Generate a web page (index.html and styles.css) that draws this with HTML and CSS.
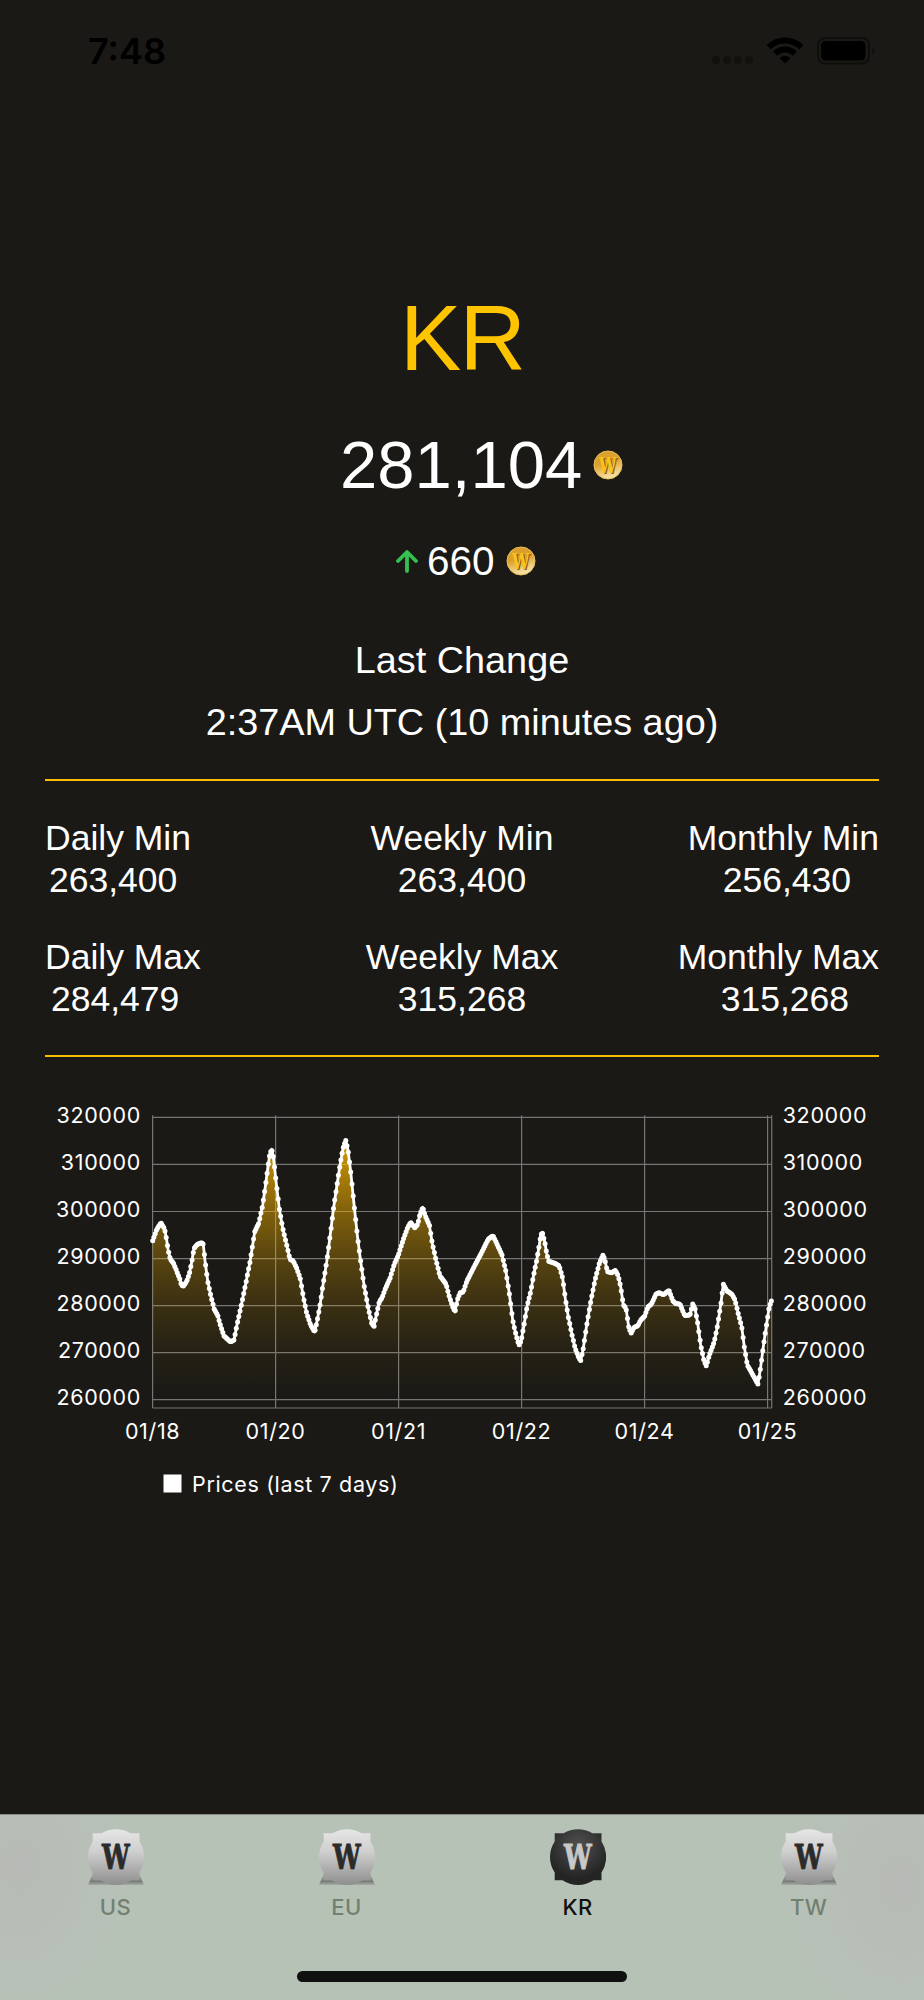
FILE: index.html
```html
<!DOCTYPE html>
<html lang="en">
<head>
    <meta charset="UTF-8">
    <meta name="viewport" content="width=device-width, initial-scale=1.0">
    <title>Token Price - KR</title>
    <link rel="stylesheet" href="styles.css">
</head>
<body>
    <!-- shared shapes for the coin and the tab icons -->
    <svg class="defs" width="0" height="0">
        <defs>
            <linearGradient id="coinFill" x1="0" y1="0" x2="0.3" y2="1">
                <stop offset="0" stop-color="#d9a02c"/>
                <stop offset="0.5" stop-color="#dc9f2e"/>
                <stop offset="0.8" stop-color="#edc873"/>
                <stop offset="1" stop-color="#f6dfa0"/>
            </linearGradient>
            <linearGradient id="lightFill" x1="0" y1="0" x2="0" y2="1">
                <stop offset="0" stop-color="#e6e6e6"/>
                <stop offset="0.4" stop-color="#cfcfcf"/>
                <stop offset="1" stop-color="#8e8e8e"/>
            </linearGradient>
            <radialGradient id="darkFill" cx="50%" cy="28%" r="60%">
                <stop offset="0" stop-color="#505050"/>
                <stop offset="1" stop-color="#242424"/>
            </radialGradient>
            <linearGradient id="shadowFill" x1="0" y1="0" x2="0" y2="1">
                <stop offset="0" stop-color="#555" stop-opacity="0"/>
                <stop offset="0.7" stop-color="#555" stop-opacity="0.65"/>
                <stop offset="1" stop-color="#777" stop-opacity="0.3"/>
            </linearGradient>
            <path id="badge" d="M4.7 4.3H13.5A28 28 0 0 1 42.5 4.3H51.5V12.5A28 28 0 0 1 51.5 43.5V51.3H43.5A28 28 0 0 1 12.5 51.3H4.7V43.5A28 28 0 0 1 4.7 12.5Z"/>
            <symbol id="coin" viewBox="0 0 30 30">
                <circle cx="15" cy="15" r="14" fill="url(#coinFill)" stroke="#e9bf5f"/>
                <text class="coin-w shade" x="7.2" y="23.8" textLength="17.5" lengthAdjust="spacingAndGlyphs">W</text>
                <text class="coin-w" x="6" y="23.2" textLength="17.5" lengthAdjust="spacingAndGlyphs">W</text>
            </symbol>
            <symbol id="tabLight" viewBox="0 0 56 56">
                <path d="M5 44L0 56H56L51 44Z" fill="url(#shadowFill)"/>
                <use href="#badge" fill="url(#lightFill)"/>
                <text class="badge-w" x="14" y="41.2" fill="#e4e4e4" textLength="28" lengthAdjust="spacingAndGlyphs">W</text>
                <text class="badge-w" x="14" y="39.6" fill="#2b2b2b" stroke="#2b2b2b" textLength="28" lengthAdjust="spacingAndGlyphs">W</text>
            </symbol>
            <symbol id="tabDark" viewBox="0 0 56 56">
                <use href="#badge" fill="url(#darkFill)"/>
                <text class="badge-w" x="14" y="39.6" fill="#c8c8c8" stroke="#c8c8c8" textLength="28" lengthAdjust="spacingAndGlyphs">W</text>
            </symbol>
        </defs>
    </svg>

    <header class="status-bar">
        <span class="time">7:48</span>
        <div class="indicators">
            <div class="dots"><i></i><i></i><i></i><i></i></div>
            <svg class="wifi" width="36" height="27" viewBox="0 0 36 27">
                <path d="M1.7 10.2A23 23 0 0 1 34.3 10.2M8.1 16.6A14 14 0 0 1 27.9 16.6" fill="none" stroke="#000" stroke-width="6"/>
                <path d="M18 26.5L12.7 21.2A7.5 7.5 0 0 1 23.3 21.2Z"/>
            </svg>
            <svg class="battery" width="59" height="28" viewBox="0 0 59 28">
                <rect x="1" y="1" width="51" height="25.5" rx="7" fill="none" stroke="#0f0e0c" stroke-width="2"/>
                <rect x="4" y="4" width="44.5" height="19.5" rx="4.5"/>
                <path d="M55.5 9.5A5.5 5.5 0 0 1 55.5 18Z" fill="#0f0e0c"/>
            </svg>
        </div>
    </header>

    <main>
        <h1>KR</h1>
        <div class="price">
            <span>281,104</span>
            <svg class="coin"><use href="#coin"/></svg>
        </div>
        <div class="change">
            <svg class="arrow" width="22" height="23" viewBox="0 0 22 23">
                <path d="M11 21V2.5M2 11L11 2L20 11" fill="none" stroke="#34c14f" stroke-width="3.8" stroke-linecap="round" stroke-linejoin="round"/>
            </svg>
            <span>660</span>
            <svg class="coin"><use href="#coin"/></svg>
        </div>
        <div class="updated">
            <div>Last Change</div>
            <div class="when">2:37AM UTC (10 minutes ago)</div>
        </div>

        <section class="stats">
            <div class="stat left"><div>Daily Min</div><div class="value">263,400</div></div>
            <div class="stat"><div>Weekly Min</div><div class="value">263,400</div></div>
            <div class="stat right"><div>Monthly Min</div><div class="value">256,430</div></div>
            <div class="stat left max"><div>Daily Max</div><div class="value">284,479</div></div>
            <div class="stat"><div>Weekly Max</div><div class="value">315,268</div></div>
            <div class="stat right max"><div>Monthly Max</div><div class="value">315,268</div></div>
        </section>

        <svg class="chart" id="chart" width="924" height="420" viewBox="0 0 924 420">
            <defs>
                <linearGradient id="areaFill" gradientUnits="userSpaceOnUse" x1="0" y1="25" x2="0" y2="318">
                    <stop offset="0" stop-color="#ffc000" stop-opacity="0.98"/>
                    <stop offset="0.16" stop-color="#ffb800" stop-opacity="0.7"/>
                    <stop offset="0.32" stop-color="#ffb800" stop-opacity="0.46"/>
                    <stop offset="0.49" stop-color="#ffb800" stop-opacity="0.27"/>
                    <stop offset="0.65" stop-color="#ffb800" stop-opacity="0.14"/>
                    <stop offset="0.81" stop-color="#ffb800" stop-opacity="0.045"/>
                    <stop offset="0.95" stop-color="#ffb800" stop-opacity="0"/>
                </linearGradient>
            </defs>
            <g id="grid"></g>
            <g id="series"></g>
            <g id="labels"></g>
            <rect x="163.5" y="384.5" width="18" height="18" fill="#fff"/>
            <text class="legend" x="192" y="402">Prices (last 7 days)</text>
        </svg>
    </main>

    <nav class="tab-bar">
        <div class="tabs">
            <div class="tab"><svg><use href="#tabLight"/></svg><span>US</span></div>
            <div class="tab"><svg><use href="#tabLight"/></svg><span>EU</span></div>
            <div class="tab active"><svg><use href="#tabDark"/></svg><span>KR</span></div>
            <div class="tab"><svg><use href="#tabLight"/></svg><span>TW</span></div>
        </div>
        <div class="home-indicator"></div>
    </nav>

    <script src="chart.js"></script>
</body>
</html>
```
FILE: styles.css
```css
body {
    margin: 0;
    width: 924px;
    height: 2000px;
    display: flex;
    flex-direction: column;
    overflow: hidden;
    background-color: #1a1915;
    color: #fff;
    font-family: "Liberation Sans", Arial, sans-serif;
}
.defs {
    position: absolute;
}
.status-bar {
    height: 101px;
    box-sizing: border-box;
    padding: 0 49px 0 88px;
    display: flex;
    justify-content: space-between;
    align-items: center;
    color: #000;
    font-family: Inter, sans-serif;
}
.time {
    font-size: 36px;
    font-weight: 600;
    line-height: 44px;
}
.indicators {
    display: flex;
    align-items: center;
}
.dots {
    display: flex;
    gap: 3px;
    margin: 18px 14px 0 0;
}
.dots i {
    width: 8px;
    height: 8px;
    border-radius: 50%;
    background-color: #12110e;
}
.battery {
    margin-left: 14px;
    margin-right: -1px;
}
main {
    flex: 1;
    padding-top: 187px;
}
h1 {
    margin: 0;
    color: #ffc400;
    font-size: 92px;
    font-weight: normal;
    line-height: 100px;
    letter-spacing: -2px;
    text-align: center;
}
.price {
    display: flex;
    align-items: center;
    margin-top: 37px;
    padding-left: 340px;
    font-size: 67px;
    line-height: 80px;
}
.price .coin {
    margin-left: 11px;
}
.coin {
    width: 30px;
    height: 30px;
}
.coin-w {
    font: bold 23px "DejaVu Serif", serif;
    fill: #f8c41c;
}
.coin-w.shade {
    fill: #8a5a12;
}
.change {
    display: flex;
    align-items: center;
    margin-top: 31px;
    padding-left: 396px;
    font-size: 40.5px;
    line-height: 50px;
}
.change span {
    margin: 0 11px 0 9px;
}
.updated {
    margin-top: 43px;
    font-size: 37.8px;
    line-height: 62px;
    text-align: center;
}
.stats {
    display: grid;
    grid-template-columns: 1fr 1fr 1fr;
    row-gap: 35px;
    margin: 26px 45px 0;
    padding: 36px 0 35px;
    border-top: 2px solid #fbbf00;
    border-bottom: 2px solid #fbbf00;
    font-size: 35.5px;
    line-height: 42px;
}
.stat {
    text-align: center;
}
.stat.left {
    text-align: left;
}
.stat.right {
    text-align: right;
}
.left .value {
    padding-left: 4px;
}
.right .value {
    padding-right: 28px;
}
.left.max .value {
    padding-left: 6px;
}
.right.max .value {
    padding-right: 30px;
}
.chart {
    display: block;
    margin-top: 33px;
}
.chart text {
    fill: #fff;
    font-family: Inter, sans-serif;
    font-size: 21.5px;
    letter-spacing: 0.65px;
}
.chart .grid-line {
    stroke: #757573;
    stroke-width: 1.2;
}
.tab-bar {
    height: 186px;
    box-sizing: border-box;
    padding-top: 14px;
    border-top: 1px solid #858a83;
    background-color: #b7c2b7;
    background-image:
        radial-gradient(ellipse 110px 150px at 20px 50px, rgba(184, 184, 182, 0.75), rgba(184, 184, 182, 0)),
        radial-gradient(ellipse 120px 150px at 900px 70px, rgba(184, 184, 182, 0.75), rgba(184, 184, 182, 0));
}
.tabs {
    display: flex;
}
.tab {
    flex: 1;
    display: flex;
    flex-direction: column;
    align-items: center;
    gap: 7px;
    color: #718171;
    font-family: Inter, sans-serif;
    font-size: 22px;
    font-weight: 500;
    line-height: 30px;
    letter-spacing: 0.4px;
}
.tab svg {
    width: 56px;
    height: 56px;
}
.tab.active {
    color: #11120f;
}
.badge-w {
    font: bold 33px "DejaVu Serif", serif;
    stroke-width: 1px;
}
.home-indicator {
    width: 330px;
    height: 11px;
    margin: 49px auto 0;
    border-radius: 6px;
    background-color: #101010;
}
```
FILE: chart.js
```javascript
const svgNS = 'http://www.w3.org/2000/svg';
const left = 152.6, right = 771.7, top_ = 25.3, bottom = 318;

// turning points of the price line, in chart units
const turns = [
    [152.7,150.7],[156.7,139.3],[161,132.7],[164.7,139.3],[166.7,150],[168,159.3],[170.3,169.3],[173.3,172.7],
    [177.3,182.7],[179.7,188.7],[181.3,194.7],[183.3,196.3],[186.7,191.3],[189.3,184],[191.7,172],[194,158.3],
    [197.3,154.3],[201.7,152.7],[203.3,154.3],[205,170.7],[207.7,190.7],[211,206.7],[214.3,219.3],[217.7,225.3],
    [220.7,236],[224,246],[230.7,252],[234,250],[237.3,233.3],[241.7,213.3],[246,192.3],[250,171.7],
    [252.3,157.3],[254.7,141.7],[258.7,133.3],[262.7,115],[265.3,96.7],[268.3,74],[270,63.3],[271.7,59.3],
    [273.3,66.7],[276.3,93.3],[279.3,118.7],[282.7,138],[286.7,155],[290,169.3],[293.3,171],[296.7,178.3],
    [300.3,188.7],[303.3,206.7],[306.7,223.3],[310.7,235],[314.7,242],[317.3,230],[320.3,213.3],[322.7,196.7],
    [326.7,171.7],[330,146.7],[333.3,120],[336.7,96.7],[340,75],[343,58.3],[345.7,50],[348,60],
    [350.7,81.7],[354,114],[357.3,145],[360.7,171.7],[364.3,196.7],[368.3,218.3],[371.7,233.3],[374,236.7],
    [376.7,223.3],[379.3,211.7],[382.3,207.3],[385.3,198.7],[390,188.3],[394,175],[398.7,164],[403.3,149.3],
    [407.7,137.3],[410.7,132.3],[414.7,137.7],[417.7,134.3],[420,124],[422.7,117.3],[425.3,126],[429.3,134.7],
    [432.3,153.3],[436,170],[440,186],[446,194],[449.3,206.7],[452.7,216.7],[455,222],[457.3,210],
    [460,202.7],[463.3,202],[466.7,191.3],[475,175],[481.7,162.3],[488.3,149],[493,145.7],[496.7,153.3],
    [502,165],[506,181.7],[509.3,203.3],[512.7,230],[516,245],[519,255.3],[521.3,250],[524,235],
    [527.3,215],[530.7,201.7],[533.3,186.7],[536.7,170],[539.3,155],[540.7,145],[542.3,142.3],[544.7,151.7],
    [546.7,163.3],[548.7,171.3],[555,173.3],[559.3,176],[562.7,188.3],[565.3,208.3],[568.3,226.7],[571.7,243.3],
    [575,257.7],[578.3,266.7],[580.7,270.7],[583.3,258.3],[586.7,235],[590.7,211.7],[595,190],[599.3,173.3],
    [603,165],[605,170],[607.3,181.7],[611.7,182.7],[615.3,180.3],[618,185],[620.7,196.7],[623.3,215],
    [626,218.3],[628.7,236.7],[631,243.3],[634,237.3],[637.7,236],[640.7,230],[644.7,226],[648,216.7],
    [651.3,214.3],[656,204],[659.3,202.7],[663.3,204.7],[669,200.3],[672.7,210.7],[676,213.7],[680,214],
    [684.7,225.7],[690,225],[692.7,214],[695,218.3],[697.7,233.3],[700.7,255],[704,270.7],[706.3,276],
    [709.3,265],[714.3,251.7],[717.3,236.7],[720.7,215],[723.3,194],[726.7,200.7],[731.7,204],[735,210],
    [738.3,224],[741.7,236.7],[744.3,256.7],[747.3,275],[751.7,282.7],[758,294.3],[760.7,276.7],[763.3,256.7],
    [766.7,233.3],[769.3,216.7],[771.7,210]
];

function add(parent, name, attrs, text) {
    const el = document.createElementNS(svgNS, name);
    for (const key in attrs) {
        el.setAttribute(key, attrs[key]);
    }
    if (text) {
        el.textContent = text;
    }
    document.getElementById(parent).appendChild(el);
}

function line(x1, y1, x2, y2) {
    add('grid', 'line', { x1: x1, y1: y1, x2: x2, y2: y2, class: 'grid-line' });
}

// horizontal lines with a price on both sides
for (let i = 0; i < 7; i++) {
    const y = 27.4 + i * 47.05;
    const price = String(320000 - i * 10000);
    line(left, y, right, y);
    add('labels', 'text', { x: 141, y: y + 5.3, 'text-anchor': 'end' }, price);
    add('labels', 'text', { x: 782.7, y: y + 5.3 }, price);
}

// vertical lines with dates
['01/18', '01/20', '01/21', '01/22', '01/24', '01/25'].forEach((date, i) => {
    const x = left + i * 123;
    line(x, top_, x, bottom);
    add('labels', 'text', { x: x, y: 349, 'text-anchor': 'middle' }, date);
});
line(right, top_, right, bottom);
line(left, bottom, right, bottom);

const path = turns.map(p => p.join(' ')).join('L');
add('series', 'path', { d: 'M' + path + 'L' + right + ' ' + bottom + 'L' + left + ' ' + bottom + 'Z', fill: 'url(#areaFill)' });
add('series', 'path', { d: 'M' + path, fill: 'none', stroke: '#fff', 'stroke-width': 2.8, 'stroke-linejoin': 'round' });

let seg = 0;
for (let x = turns[0][0]; x <= right; x += 1.23) {
    while (seg < turns.length - 2 && turns[seg + 1][0] < x) seg++;
    const [ax, ay] = turns[seg];
    const [bx, by] = turns[seg + 1];
    const y = ay + (by - ay) * (x - ax) / (bx - ax);
    add('series', 'circle', { cx: x.toFixed(1), cy: y.toFixed(1), r: 2.5, fill: '#fff' });
}
```
